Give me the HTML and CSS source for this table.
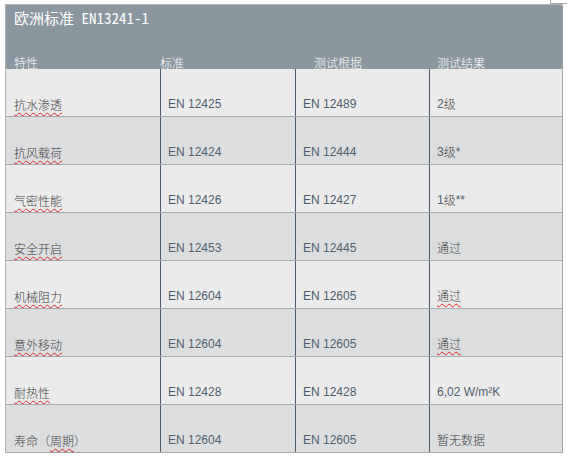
FILE: index.html
```html
<!DOCTYPE html>
<html lang="zh">
<head>
<meta charset="utf-8">
<title>欧洲标准 EN13241-1</title>
<link rel="stylesheet" href="styles.css">
</head>
<body>
<div class="page">
  <span class="corner"></span>
  <div class="sheet">
    <div class="head">
      <div class="title">欧洲标准 EN13241-1</div>
      <div class="cols">
        <span class="h1">特性</span>
        <span class="h2">标准</span>
        <span class="h3">测试根据</span>
        <span class="h4">测试结果</span>
      </div>
    </div>
    <div class="grid">
      <div class="row light"><div class="c c1"><span class="sp">抗水渗透</span></div><div class="c c2">EN 12425</div><div class="c c3">EN 12489</div><div class="c c4">2<span class="cjk">级</span></div></div>
      <div class="row dark"><div class="c c1"><span class="sp">抗风载荷</span></div><div class="c c2">EN 12424</div><div class="c c3">EN 12444</div><div class="c c4">3<span class="cjk">级</span>*</div></div>
      <div class="row light"><div class="c c1"><span class="sp">气密性能</span></div><div class="c c2">EN 12426</div><div class="c c3">EN 12427</div><div class="c c4">1<span class="cjk">级</span>**</div></div>
      <div class="row dark"><div class="c c1"><span class="sp">安全开启</span></div><div class="c c2">EN 12453</div><div class="c c3">EN 12445</div><div class="c c4"><span class="cjk">通过</span></div></div>
      <div class="row light"><div class="c c1"><span class="sp">机械阻力</span></div><div class="c c2">EN 12604</div><div class="c c3">EN 12605</div><div class="c c4"><span class="cjk sp">通过</span></div></div>
      <div class="row dark"><div class="c c1"><span class="sp">意外移动</span></div><div class="c c2">EN 12604</div><div class="c c3">EN 12605</div><div class="c c4"><span class="cjk sp">通过</span></div></div>
      <div class="row light"><div class="c c1"><span class="sp">耐热性</span></div><div class="c c2">EN 12428</div><div class="c c3">EN 12428</div><div class="c c4">6,02 W/m²K</div></div>
      <div class="row dark"><div class="c c1">寿命（<span class="sp">周期</span>）</div><div class="c c2">EN 12604</div><div class="c c3">EN 12605</div><div class="c c4"><span class="cjk">暂无数据</span></div></div>
    </div>
  </div>
</div>
</body>
</html>
```
FILE: styles.css
```css
html, body {
  margin: 0;
  padding: 0;
  background: #ffffff;
}
.page {
  position: relative;
  padding: 4px 0 0 5px;
  width: 558px;
}
.corner {
  position: absolute;
  left: 550px;
  top: 0;
  width: 17px;
  height: 3px;
  border-left: 1px solid #a8a8a8;
  border-bottom: 1px solid #a8a8a8;
}
.sheet {
  width: 556px;
  border: 1px solid #b0b0b0;
  border-top: 1px solid #b4b4b4;
  border-right: 1px solid #a4a4a4;
  border-bottom: 1px solid #a4a4a4;
  font-family: "Liberation Sans", Arial, "Noto Sans CJK SC", sans-serif;
}
.head {
  background: #8a979f;
  height: 64px;
  display: flex;
  flex-direction: column;
  justify-content: space-between;
  color: #ffffff;
}
.title {
  font-family: "Noto Sans Mono CJK SC", "Noto Sans CJK SC", monospace;
  font-weight: 300;
  font-size: 15px;
  line-height: 20px;
  padding: 3px 0 0 8px;
}
.cols {
  display: grid;
  grid-template-columns: 154px 135px 134px 133px;
  font-family: "Noto Sans CJK SC", sans-serif;
  font-weight: 300;
  font-size: 12px;
  line-height: 14px;
  height: 13px;
  overflow: visible;
}
.cols span { display: block; }
.h1 { padding-left: 8px; }
.h2 { padding-left: 0; }
.h3 { padding-left: 19px; }
.h4 { padding-left: 8px; }
.row {
  display: grid;
  grid-template-columns: 155px 135px 134px 132px;
  height: 48px;
  box-sizing: border-box;
  border-top: 1px solid #a6aaae;
}
.row:first-child { border-top: none; height: 47px; }
.light { background: #ebebeb; }
.dark { background: #dcdddf; }
.c {
  display: flex;
  align-items: flex-end;
  padding: 0 0 5px 7px;
  font-size: 12px;
  line-height: 14px;
  color: #4f5e6d;
  border-right: 1px solid #4b5a69;
  white-space: pre;
}
.c4 { border-right: none; }
.c1 {
  padding-left: 8px;
  color: #3f3f3f;
  font-family: "Noto Sans CJK SC", sans-serif;
  font-weight: 300;
  padding-bottom: 4px;
}
.cjk {
  font-family: "Noto Sans CJK SC", sans-serif;
  font-weight: 300;
  color: #3f3f3f;
}
.c4 { padding-left: 7px; }
.sp {
  text-decoration: underline wavy #e02020;
  text-decoration-thickness: 1px;
  text-underline-offset: 2px;
  text-decoration-skip-ink: none;
}
```
